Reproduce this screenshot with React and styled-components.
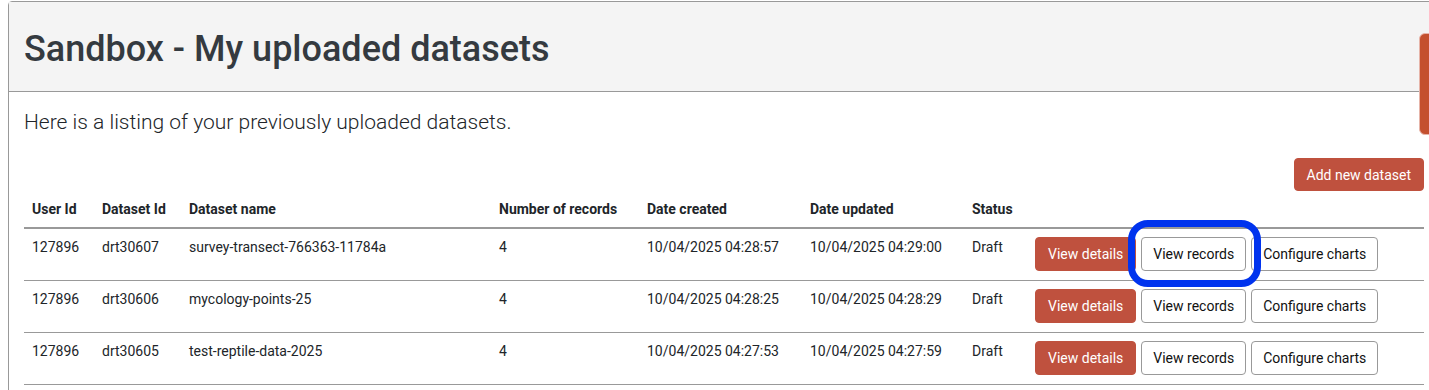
import React from "react";
import styled, { createGlobalStyle } from "styled-components";

const GlobalStyle = createGlobalStyle`
    body {
        margin: 0;
        padding-top: 1px;
        font-family: Roboto, "Liberation Sans", sans-serif;
        color: #212529;
        background: #fff;
        overflow-x: hidden;
    }
`;

const Panel = styled.div`
    margin: 0 -11px 0 8px;
    border: 1px solid #999;
    border-radius: 4px 4px 0 0;
    min-height: 400px;
`;

const PanelHeader = styled.div`
    background: #f4f4f4;
    border-bottom: 1px solid #999;
    padding: 23px 15px 18px;
`;

const Title = styled.h1`
    margin: 0;
    font-size: 36px;
    font-weight: 500;
    line-height: 48px;
    color: #343a40;
`;

const PanelBody = styled.div`
    padding: 15px 15px 0;
`;

const Intro = styled.p`
    margin: 0;
    font-size: 21px;
    font-weight: 300;
    line-height: 30px;
`;

const Toolbar = styled.div`
    display: flex;
    justify-content: flex-end;
    margin-top: 21px;
`;

const Button = styled.button`
    font-family: Roboto, "Liberation Sans", sans-serif;
    font-size: 14px;
    line-height: 20px;
    height: ${(p) => (p.$small ? 33 : 34)}px;
    padding: 0 ${(p) => p.$px || 12}px;
    border-radius: 4px;
    border: 1px solid ${(p) => (p.$primary ? "#bf513e" : "#999")};
    background: ${(p) => (p.$primary ? "#bf513e" : "#fff")};
    color: ${(p) => (p.$primary ? "#fff" : "#111")};
    cursor: pointer;
    white-space: nowrap;
`;

const Table = styled.table`
    width: 100%;
    border-collapse: collapse;
    table-layout: fixed;
    font-size: 14px;
    line-height: 21px;
`;

const Th = styled.th`
    text-align: left;
    font-weight: 700;
    padding: 8px 8px 7px;
    border-bottom: 2px solid #999;
    white-space: nowrap;
`;

const Td = styled.td`
    padding: 8px 8px 9px;
    vertical-align: top;
    border-bottom: 1px solid #999;
    white-space: nowrap;
`;

const Actions = styled.div`
    display: flex;
    gap: 5px;
`;

const Highlighted = styled.span`
    position: relative;
    display: inline-flex;
`;

const Ring = styled.span`
    position: absolute;
    left: -13px;
    right: -15px;
    top: -17px;
    bottom: -16px;
    border: 7px solid #0033ee;
    border-radius: 20px;
    pointer-events: none;
`;

const FeedbackTab = styled.div`
    position: fixed;
    top: 33px;
    right: -20px;
    width: 28px;
    height: 100px;
    background: #c4502f;
    border: 1px solid #e6b4a8;
    border-radius: 6px 0 0 6px;
`;

const rows = [
    ["127896", "drt30607", "survey-transect-766363-11784a", "4", "10/04/2025 04:28:57", "10/04/2025 04:29:00", "Draft"],
    ["127896", "drt30606", "mycology-points-25", "4", "10/04/2025 04:28:25", "10/04/2025 04:28:29", "Draft"],
    ["127896", "drt30605", "test-reptile-data-2025", "4", "10/04/2025 04:27:53", "10/04/2025 04:27:59", "Draft"],
];

const columns = [
    ["User Id", 70],
    ["Dataset Id", 87],
    ["Dataset name", 310],
    ["Number of records", 148],
    ["Date created", 163],
    ["Date updated", 162],
    ["Status", 63],
    ["", null],
];

const App = () => {
    return (
        <>
            <GlobalStyle />
            <Panel>
                <PanelHeader>
                    <Title>Sandbox - My uploaded datasets</Title>
                </PanelHeader>
                <PanelBody>
                    <Intro>Here is a listing of your previously uploaded datasets.</Intro>
                    <Toolbar>
                        <Button $primary $small>Add new dataset</Button>
                    </Toolbar>
                    <Table>
                        <colgroup>
                            {columns.map(([name, w], i) => (
                                <col key={i} style={w ? { width: w } : undefined} />
                            ))}
                        </colgroup>
                        <thead>
                            <tr>
                                {columns.map(([name], i) => (
                                    <Th key={i}>{name}</Th>
                                ))}
                            </tr>
                        </thead>
                        <tbody>
                            {rows.map((row, r) => (
                                <tr key={r}>
                                    {row.map((cell, c) => (
                                        <Td key={c}>{cell}</Td>
                                    ))}
                                    <Td>
                                        <Actions>
                                            <Button $primary>View details</Button>
                                            {r === 0 ? (
                                                <Highlighted>
                                                    <Button $px={11}>View records</Button>
                                                    <Ring />
                                                </Highlighted>
                                            ) : (
                                                <Button $px={11}>View records</Button>
                                            )}
                                            <Button $px={11}>Configure charts</Button>
                                        </Actions>
                                    </Td>
                                </tr>
                            ))}
                        </tbody>
                    </Table>
                </PanelBody>
            </Panel>
            <FeedbackTab />
        </>
    );
};

export default App;
